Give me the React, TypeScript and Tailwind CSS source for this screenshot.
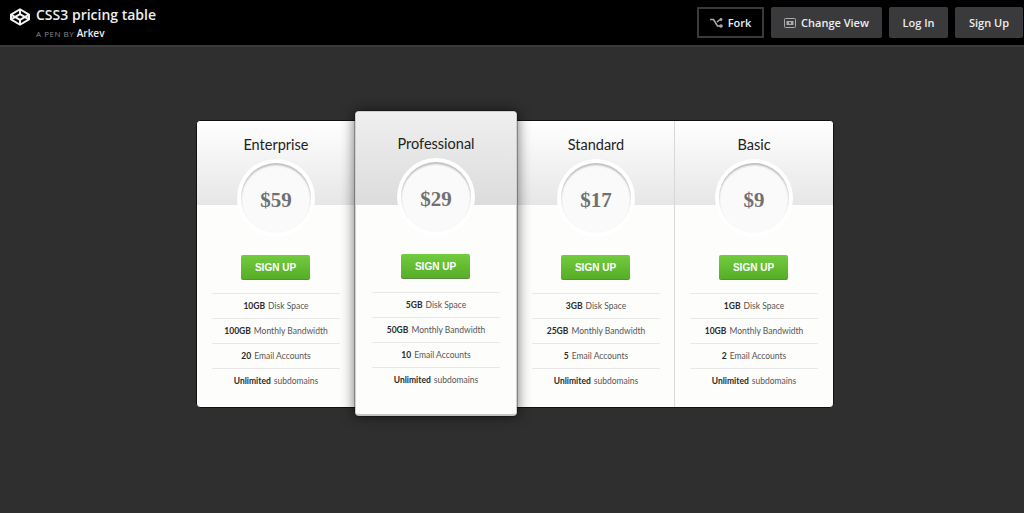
interface Plan {
  name: string;
  price: string;
  disk: string;
  bandwidth: string;
  emails: string;
  featured?: boolean;
}

const plans: Plan[] = [
  { name: "Enterprise", price: "$59", disk: "10GB", bandwidth: "100GB", emails: "20" },
  { name: "Professional", price: "$29", disk: "5GB", bandwidth: "50GB", emails: "10", featured: true },
  { name: "Standard", price: "$17", disk: "3GB", bandwidth: "25GB", emails: "5" },
  { name: "Basic", price: "$9", disk: "1GB", bandwidth: "10GB", emails: "2" },
];

function CodepenLogo() {
  return (
    <svg width="20" height="18" viewBox="0 0 24 22" fill="none" stroke="#f2f2f2" strokeWidth="2.4" strokeLinejoin="round">
      <polygon points="12 1.5 23 8 23 14 12 20.5 1 14 1 8 12 1.5" />
      <line x1="12" y1="20.5" x2="12" y2="14.5" />
      <polyline points="23 8 12 14.5 1 8" />
      <polyline points="1 14 12 7.5 23 14" />
      <line x1="12" y1="1.5" x2="12" y2="7.5" />
    </svg>
  );
}

function ForkIcon() {
  return (
    <svg width="13" height="11" viewBox="0 0 13 11" fill="none" stroke="#aaa" strokeWidth="1.6">
      <path d="M0 1.5h3.5l4 6.5H10" />
      <path d="M7 4l3-2.5" />
      <circle cx="11" cy="1.5" r="1.4" fill="#aaa" stroke="none" />
      <circle cx="11" cy="8" r="1.8" fill="#aaa" stroke="none" />
    </svg>
  );
}

function Row({ strong, rest, first }: { strong: string; rest: string; first?: boolean }) {
  return (
    <li className={`flex items-center justify-center gap-[3px] text-[8.5px] text-[#555] ${first ? "h-[24px]" : "h-[25px] border-t border-[#e8e8e8]"}`}>
      <b className="font-bold text-[#2a2a2a]">{strong}</b>
      <span>{rest}</span>
    </li>
  );
}

function PlanColumn({ plan, divider }: { plan: Plan; divider?: boolean }) {
  const f = plan.featured;
  return (
    <div
      className={
        f
          ? "relative z-10 w-[162px] -mt-[10px] h-[305px] shrink-0 rounded-[4px] overflow-hidden border border-[#cfcfcf] border-b-2 border-b-[#c4c4c4] bg-[#fdfdfb] shadow-[0_0_0_1px_rgba(0,0,0,0.25),0_0_14px_rgba(0,0,0,0.6)]"
          : `w-[158px] shrink-0 h-full ${divider ? "-ml-[1px] w-[159px] border-l border-[#d8d8d8]" : ""}`
      }
    >
      <div
        className={`flex justify-center text-[14.5px] leading-[20px] text-[#222] bg-gradient-to-b ${
          f ? "h-[93px] pt-[22px] from-[#efefef] to-[#dcdcdc]" : "h-[84px] pt-[14px] rounded-t-[4px] from-white to-[#e6e6e6]"
        }`}
      >
        {plan.name}
      </div>
      <div className="relative flex flex-col items-center">
        {/* price badge sits over the header edge */}
        <div className={`absolute w-[78px] h-[78px] rounded-full bg-white p-[4px] ${f ? "-top-[47px]" : "-top-[46px]"}`}>
          <div className="w-full h-full pt-[6px] rounded-full bg-[#fafafa] shadow-[inset_0_2px_2px_rgba(0,0,0,0.25)] flex items-center justify-center font-['Liberation_Serif',serif] font-bold text-[21px] text-[#707070]">
            {plan.price}
          </div>
        </div>
        <button className={`w-[69px] h-[25px] mr-[1px] shrink-0 rounded-[2px] bg-gradient-to-b from-[#72cc3e] to-[#56ad27] border-b border-[#5c8a45] font-['Liberation_Sans',sans-serif] font-bold text-[10px] text-white ${f ? "mt-[49px]" : "mt-[50px]"}`}>
          SIGN UP
        </button>
        <ul className="mt-[13px] w-[128px] border-t border-[#e8e8e8]">
          <Row strong={plan.disk} rest="Disk Space" first />
          <Row strong={plan.bandwidth} rest="Monthly Bandwidth" />
          <Row strong={plan.emails} rest="Email Accounts" />
          <Row strong="Unlimited" rest="subdomains" />
        </ul>
      </div>
    </div>
  );
}

export default function App() {
  return (
    <div className="w-[1024px] h-[513px] overflow-hidden bg-[#2f2f2f] flex flex-col font-['Lato','Noto_Sans',sans-serif]">
      <header className="h-[47px] shrink-0 bg-black border-b-[2px] border-[#3a3a3a] flex justify-between pl-[10px] pr-[1px] pt-[7px] font-['Open_Sans','Noto_Sans',sans-serif]">
        <div className="flex gap-[6px]">
          <div className="pt-[1px]">
            <CodepenLogo />
          </div>
          <div>
            <div className="text-[14px] leading-[16px] font-semibold text-[#eee]">CSS3 pricing table</div>
            <div className="text-[8px] leading-[12px] mt-[4px] tracking-[0.5px] text-[#888]">
              A PEN BY <span className="text-[10px] tracking-normal font-semibold text-[#eee]">Arkev</span>
            </div>
          </div>
        </div>
        <div className="flex gap-[7px] text-[11px] font-semibold text-[#eee]">
          <button className="w-[67px] h-[31px] pt-[1px] border-2 border-[#3a3a3a] bg-black flex items-center justify-center gap-[5px]">
            <ForkIcon />
            Fork
          </button>
          <button className="w-[111px] h-[31px] pt-[1px] rounded-[2px] bg-[#3a3a3c] flex items-center justify-center gap-[5px]">
            <svg width="12" height="10" viewBox="0 0 12 10" fill="none">
              <rect x="0.5" y="0.5" width="11" height="9" rx="1" stroke="#aaa" />
              <rect x="2.5" y="3" width="7" height="4" fill="#aaa" />
              <circle cx="6" cy="5" r="1" fill="#333" />
            </svg>
            Change View
          </button>
          <button className="w-[59px] h-[31px] pt-[1px] rounded-[2px] bg-[#3a3a3c]">Log In</button>
          <button className="w-[68px] h-[31px] pt-[1px] rounded-[2px] bg-[#3a3a3c]">Sign Up</button>
        </div>
      </header>
      <main className="flex-1 flex justify-center pt-[73px] pl-[6px]">
        <div className="h-[288px] flex rounded-[4px] bg-[#fdfdfb] border border-[#111]">
          {plans.map((p, i) => (
            <PlanColumn key={p.name} plan={p} divider={i === 3} />
          ))}
        </div>
      </main>
    </div>
  );
}
